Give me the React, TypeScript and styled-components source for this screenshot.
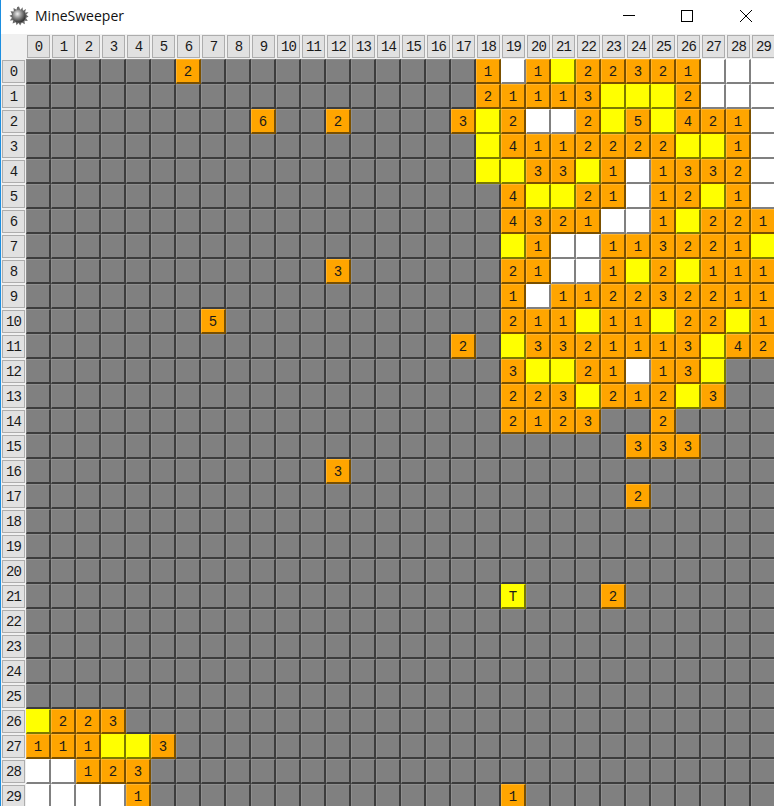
import React from "react";
import styled, { createGlobalStyle } from "styled-components";

const COLS = 30;
const ROWS = 30;
const rowData: Record<number, Record<number, string>> = {
  0: { 6: "2", 18: "1", 19: "w", 20: "1", 21: "y", 22: "2", 23: "2", 24: "3", 25: "2", 26: "1", 27: "w", 28: "w", 29: "w" },
  1: { 18: "2", 19: "1", 20: "1", 21: "1", 22: "3", 23: "y", 24: "y", 25: "y", 26: "2", 27: "w", 28: "w", 29: "w" },
  2: { 9: "6", 12: "2", 17: "3", 18: "y", 19: "2", 20: "w", 21: "w", 22: "2", 23: "y", 24: "5", 25: "y", 26: "4", 27: "2", 28: "1", 29: "w" },
  3: { 18: "y", 19: "4", 20: "1", 21: "1", 22: "2", 23: "2", 24: "2", 25: "2", 26: "y", 27: "y", 28: "1", 29: "w" },
  4: { 18: "y", 19: "y", 20: "3", 21: "3", 22: "y", 23: "1", 24: "w", 25: "1", 26: "3", 27: "3", 28: "2", 29: "w" },
  5: { 19: "4", 20: "y", 21: "y", 22: "2", 23: "1", 24: "w", 25: "1", 26: "2", 27: "y", 28: "1", 29: "w" },
  6: { 19: "4", 20: "3", 21: "2", 22: "1", 23: "w", 24: "w", 25: "1", 26: "y", 27: "2", 28: "2", 29: "1" },
  7: { 19: "y", 20: "1", 21: "w", 22: "w", 23: "1", 24: "1", 25: "3", 26: "2", 27: "2", 28: "1", 29: "y" },
  8: { 12: "3", 19: "2", 20: "1", 21: "w", 22: "w", 23: "1", 24: "y", 25: "2", 26: "y", 27: "1", 28: "1", 29: "1" },
  9: { 19: "1", 20: "w", 21: "1", 22: "1", 23: "2", 24: "2", 25: "3", 26: "2", 27: "2", 28: "1", 29: "1" },
  10: { 7: "5", 19: "2", 20: "1", 21: "1", 22: "y", 23: "1", 24: "1", 25: "y", 26: "2", 27: "2", 28: "y", 29: "1" },
  11: { 17: "2", 19: "y", 20: "3", 21: "3", 22: "2", 23: "1", 24: "1", 25: "1", 26: "3", 27: "y", 28: "4", 29: "2" },
  12: { 19: "3", 20: "y", 21: "y", 22: "2", 23: "1", 24: "w", 25: "1", 26: "3", 27: "y" },
  13: { 19: "2", 20: "2", 21: "3", 22: "y", 23: "2", 24: "1", 25: "2", 26: "y", 27: "3" },
  14: { 19: "2", 20: "1", 21: "2", 22: "3", 25: "2" },
  15: { 24: "3", 25: "3", 26: "3" },
  16: { 12: "3" },
  17: { 24: "2" },
  21: { 19: "T", 23: "2" },
  26: { 0: "y", 1: "2", 2: "2", 3: "3" },
  27: { 0: "1", 1: "1", 2: "1", 3: "y", 4: "y", 5: "3" },
  28: { 0: "w", 1: "w", 2: "1", 3: "2", 4: "3" },
  29: { 0: "w", 1: "w", 2: "w", 3: "w", 4: "1", 19: "1" },
};

type Kind = "hidden" | "open" | "flag" | "clear";

const palette: Record<Kind, { bg: string; light: string; dark: string }> = {
  hidden: { bg: "#808080", light: "#8e8e8e", dark: "#3c3c3c" },
  open: { bg: "#ffa500", light: "#ffb52e", dark: "#7a5000" },
  flag: { bg: "#ffff00", light: "#ffff00", dark: "#7a7a00" },
  clear: { bg: "#ffffff", light: "#ffffff", dark: "#808080" },
};

const kindOf = (v: string | undefined): Kind => {
  if (!v) return "hidden";
  if (v === "w") return "clear";
  if (v === "y" || v === "T") return "flag";
  return "open";
};

const GlobalStyle = createGlobalStyle`
  html, body {
    margin: 0;
    padding: 0;
    width: 774px;
    height: 806px;
    overflow: hidden;
    background: #f0f0f0;
  }
`;

const Window = styled.div`
  width: 774px;
  height: 806px;
  overflow: hidden;
  box-sizing: border-box;
  border-left: 1px solid #1c8ee0;
  display: flex;
  flex-direction: column;
`;

const TitleBar = styled.div`
  height: 34px;
  flex: none;
  background: #fff;
  display: flex;
  align-items: center;
  padding: 0 0 3px 8px;
  box-sizing: border-box;
`;

const AppTitle = styled.span`
  margin-left: 6px;
  font: 14px "Open Sans", "Noto Sans", sans-serif;
  color: #111;
`;

const Controls = styled.div`
  margin-left: auto;
  margin-right: -1px;
  display: flex;
  align-items: center;
  gap: 1px;
`;

const Control = styled.div`
  width: 58px;
  height: 30px;
  display: flex;
  align-items: center;
  justify-content: center;
  svg {
    overflow: visible;
  }
`;

const Board = styled.div`
  display: grid;
  grid-template-columns: repeat(${COLS + 1}, 25px);
  grid-auto-rows: 25px;
  width: max-content;
`;

const Corner = styled.div``;

const Header = styled.div`
  box-sizing: border-box;
  margin: 1px;
  padding-top: 1px;
  background: #e1e1e1;
  border: 1px solid #adadad;
  display: flex;
  align-items: center;
  justify-content: center;
  font: 14px "Liberation Mono", "DejaVu Sans Mono", monospace;
  letter-spacing: -1px;
  color: #1a1a1a;
`;

const Cell = styled.div<{ $kind: Kind }>`
  box-sizing: border-box;
  padding-top: 1px;
  background: ${(p) => palette[p.$kind].bg};
  border-top: 1px solid ${(p) => palette[p.$kind].light};
  border-left: 1px solid ${(p) => palette[p.$kind].light};
  border-right: 2px solid ${(p) => palette[p.$kind].dark};
  border-bottom: 2px solid ${(p) => palette[p.$kind].dark};
  display: flex;
  align-items: center;
  justify-content: center;
  font: 14px "Liberation Mono", "DejaVu Sans Mono", monospace;
  color: #1a1a1a;
`;

const MineIcon = () => (
  <svg width="20" height="20" viewBox="0 0 20 20" aria-hidden="true">
    <defs>
      <radialGradient id="mine" cx="0.38" cy="0.34" r="0.72">
        <stop offset="0" stopColor="#f0f0f0" />
        <stop offset="0.35" stopColor="#a0a0a0" />
        <stop offset="0.75" stopColor="#505050" />
        <stop offset="1" stopColor="#242424" />
      </radialGradient>
    </defs>
    <path
      d="M10 .5L11.3 4 13.6 1.2 13.9 4.8 17 3 16 6.400 19.500 6.200 17.200 8.800 19.500 10.500 17 12 18.800 15 15.500 14.800 15.800 18.300 12.800 16.500 11.200 19.500 9.500 17 7.500 19.300 6.800 16.200 3.600 17.600 4.200 14.300 .8 14.500 3 11.800 .5 9.800 3.200 8.500 1.500 5.200 4.800 5.500 4.500 2 7.500 3.800 8.200 1z"
      fill="#6a6a6a"
    />
    <circle cx="10" cy="10" r="6.6" fill="url(#mine)" />
  </svg>
);

export default function App() {
  const indices = Array.from({ length: COLS }, (_, i) => i);
  const rows = Array.from({ length: ROWS }, (_, i) => i);
  return (
    <>
      <GlobalStyle />
      <Window>
        <TitleBar>
          <MineIcon />
          <AppTitle>MineSweeper</AppTitle>
          <Controls>
            <Control>
              <svg width="12" height="12" viewBox="0 0 12 12"><path d="M1 5.500H13" stroke="#000" /></svg>
            </Control>
            <Control>
              <svg width="12" height="12" viewBox="0 0 12 12"><rect x="0.5" y="0.5" width="11" height="11" fill="none" stroke="#000" /></svg>
            </Control>
            <Control>
              <svg width="12" height="12" viewBox="0 0 12 12"><path d="M0 0L12 12M12 0L0 12" stroke="#000" /></svg>
            </Control>
          </Controls>
        </TitleBar>
        <Board>
          <Corner />
          {indices.map((c) => (
            <Header key={c}>{c}</Header>
          ))}
          {rows.map((r) => (
            <React.Fragment key={r}>
              <Header>{r}</Header>
              {indices.map((c) => {
                const v = rowData[r]?.[c];
                const kind = kindOf(v);
                const text = kind === "open" || v === "T" ? v : "";
                return (
                  <Cell key={c} $kind={kind}>
                    {text}
                  </Cell>
                );
              })}
            </React.Fragment>
          ))}
        </Board>
      </Window>
    </>
  );
}
